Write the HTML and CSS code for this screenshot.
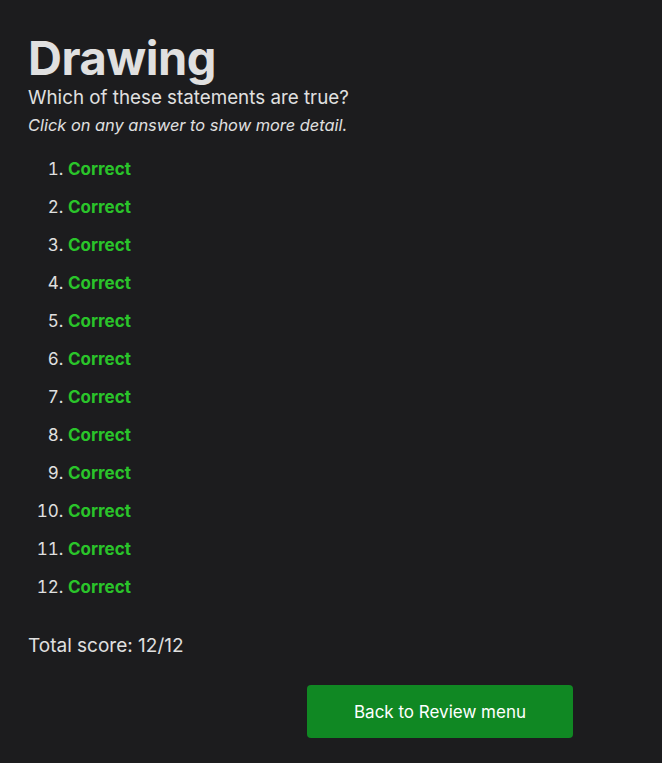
FILE: index.html
```html
<!DOCTYPE html>
<html>
<head>
<meta charset="utf-8">
<link rel="stylesheet" href="styles.css">
</head>
<body>
<main class="page">
  <h1 class="title">Drawing</h1>
  <p class="question">Which of these statements are true?</p>
  <p class="hint">Click on any answer to show more detail.</p>
  <ol class="answers">
    <li><span class="correct">Correct</span></li>
    <li><span class="correct">Correct</span></li>
    <li><span class="correct">Correct</span></li>
    <li><span class="correct">Correct</span></li>
    <li><span class="correct">Correct</span></li>
    <li><span class="correct">Correct</span></li>
    <li><span class="correct">Correct</span></li>
    <li><span class="correct">Correct</span></li>
    <li><span class="correct">Correct</span></li>
    <li><span class="correct">Correct</span></li>
    <li><span class="correct">Correct</span></li>
    <li><span class="correct">Correct</span></li>
  </ol>
  <p class="score">Total score: 12/12</p>
  <div class="actions">
    <button class="back">Back to Review menu</button>
  </div>
</main>
</body>
</html>
```

FILE: styles.css
```css
html, body {
  margin: 0;
  padding: 0;
  background: #1c1c1e;
}
body {
  font-family: Inter, "Noto Sans", sans-serif;
  color: #e0e0e0;
}
.page {
  padding: 30px 28px 20px 28px;
}
.title {
  margin: 0;
  font-size: 47px;
  font-weight: 700;
  line-height: 56px;
  letter-spacing: -0.5px;
}
.question {
  margin: 0;
  font-size: 18.8px;
  line-height: 24px;
}
.hint {
  margin: 4px 0 0 0;
  font-size: 16.4px;
  font-style: italic;
  line-height: 22px;
}
.answers {
  margin: 14px 0 0 0;
  padding-left: 40px;
  font-size: 17px;
}
.answers li {
  line-height: 38px;
}
.correct {
  color: #2ac42a;
  font-weight: 700;
}
.score {
  margin: 28px 0 0 0;
  font-size: 19px;
  line-height: 24px;
}
.actions {
  display: flex;
  margin-top: 27px;
}
.back {
  width: 266px;
  height: 53px;
  margin-left: 279px;
  background: #108823;
  color: #ffffff;
  border: none;
  border-radius: 4px;
  font-family: Inter, "Noto Sans", sans-serif;
  font-size: 17px;
}
```
